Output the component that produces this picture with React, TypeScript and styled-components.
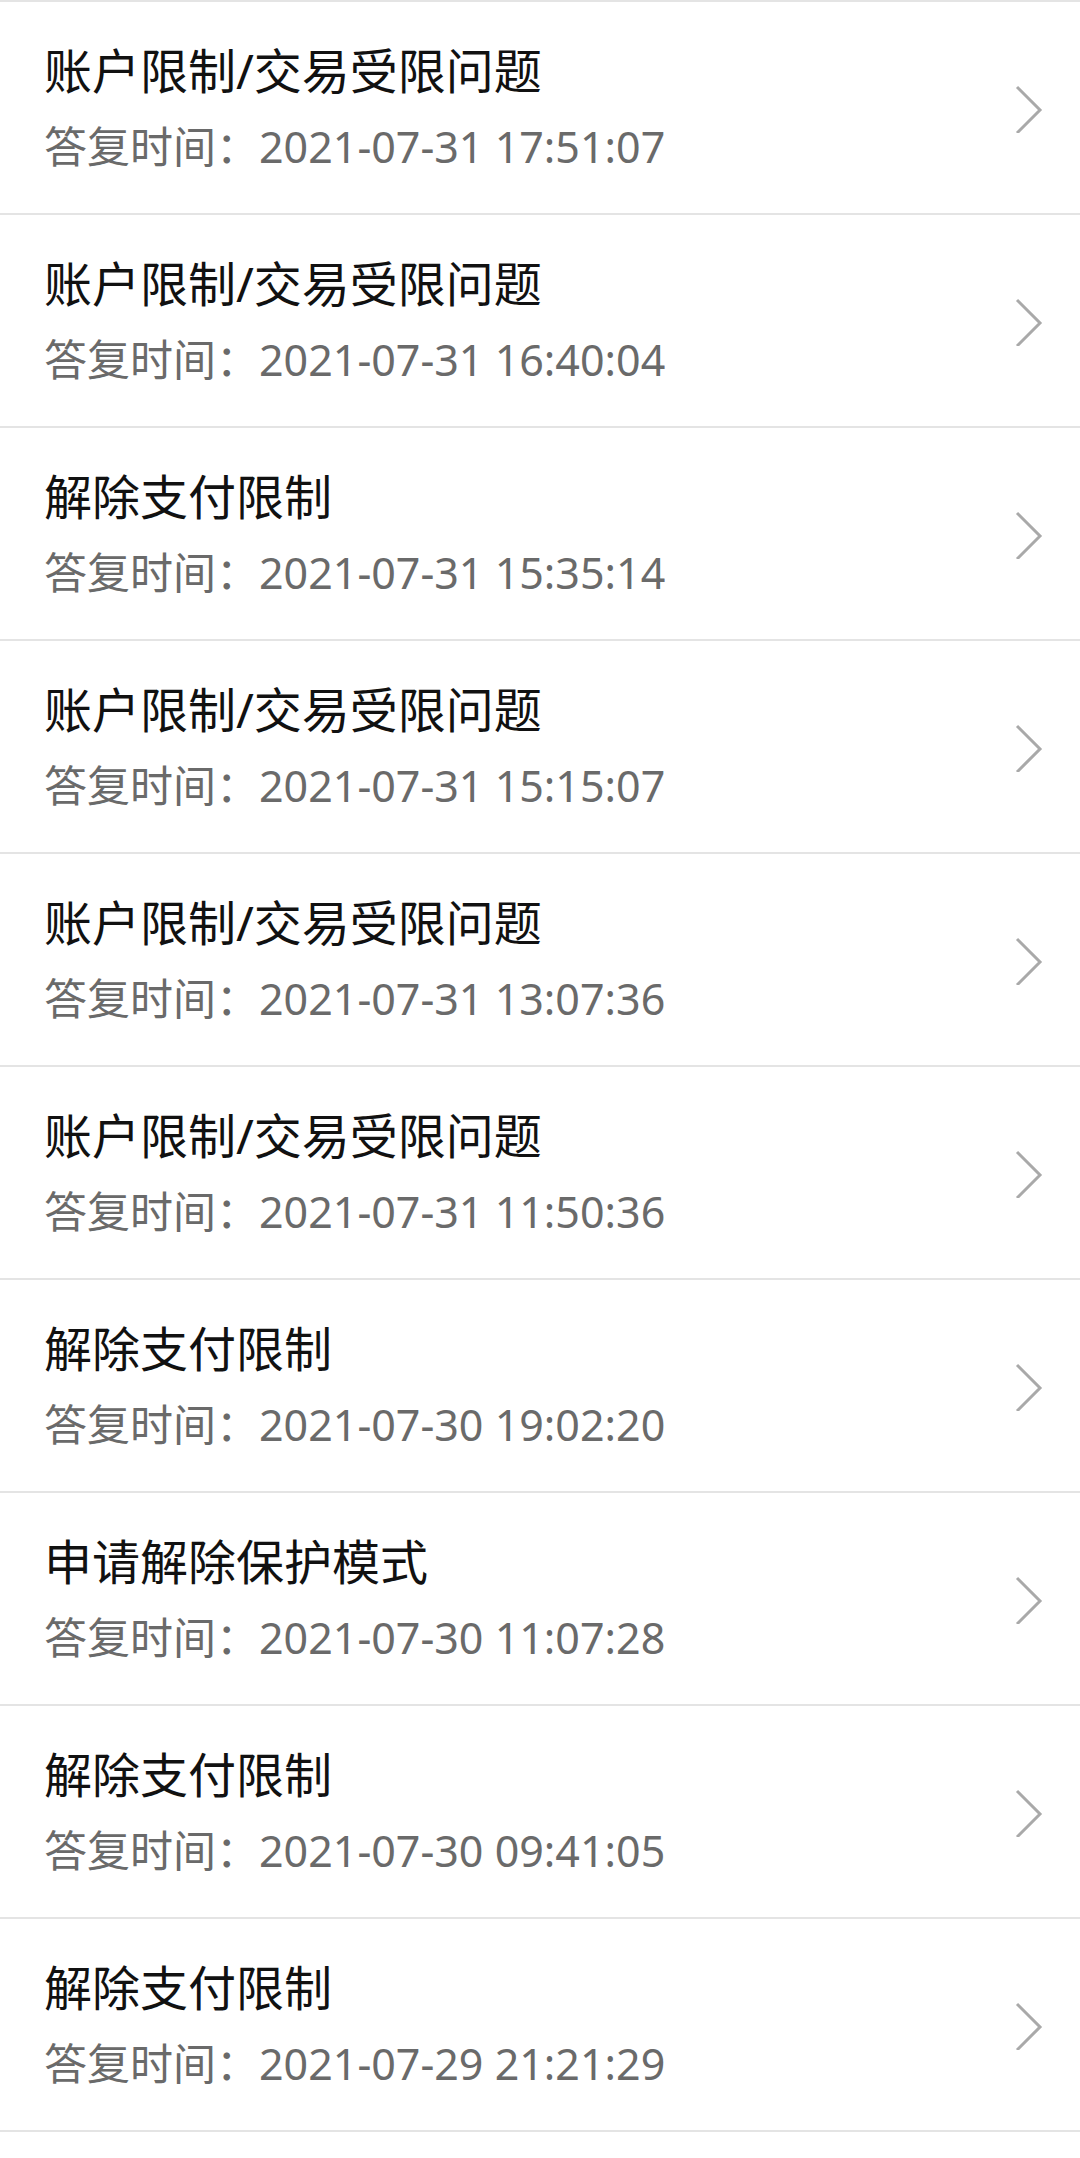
import styled, { createGlobalStyle } from 'styled-components';

const GlobalStyle = createGlobalStyle`
    html, body {
        margin: 0;
        padding: 0;
        background: #ffffff;
    }
    body {
        font-family: "Noto Sans", "Noto Sans CJK SC", sans-serif;
    }
`;

const List = styled.div`
    width: 1080px;
    border-top: 2px solid #e4e4e4;
    background: #ffffff;
`;

const Row = styled.div`
    display: flex;
    align-items: center;
    height: 211px;
    box-sizing: content-box;
    padding: 0 36px 0 44px;
    border-bottom: 2px solid #e4e4e4;
`;

const Texts = styled.div`
    flex: 1;
    display: flex;
    flex-direction: column;
    gap: 18px;
`;

const Title = styled.div`
    font-size: 48px;
    line-height: 60px;
    color: #111111;
`;

const Time = styled.div`
    font-size: 43px;
    line-height: 56px;
    color: #6a6a6a;
`;

const Chevron = styled.svg`
    flex: none;
    width: 30px;
    height: 50px;
`;

const answers = [
    { title: '账户限制/交易受限问题', time: '2021-07-31 17:51:07' },
    { title: '账户限制/交易受限问题', time: '2021-07-31 16:40:04' },
    { title: '解除支付限制', time: '2021-07-31 15:35:14' },
    { title: '账户限制/交易受限问题', time: '2021-07-31 15:15:07' },
    { title: '账户限制/交易受限问题', time: '2021-07-31 13:07:36' },
    { title: '账户限制/交易受限问题', time: '2021-07-31 11:50:36' },
    { title: '解除支付限制', time: '2021-07-30 19:02:20' },
    { title: '申请解除保护模式', time: '2021-07-30 11:07:28' },
    { title: '解除支付限制', time: '2021-07-30 09:41:05' },
    { title: '解除支付限制', time: '2021-07-29 21:21:29' },
];

const App = () => {
    return (
        <>
            <GlobalStyle />
            <List>
                {answers.map((a, i) => (
                    <Row key={i}>
                        <Texts>
                            <Title>{a.title}</Title>
                            <Time>答复时间：{a.time}</Time>
                        </Texts>
                        <Chevron viewBox="0 0 30 50">
                            <polyline points="3,4 26,27 3,50" fill="none" stroke="#a9a9a9" strokeWidth="3" />
                        </Chevron>
                    </Row>
                ))}
            </List>
        </>
    );
};

export default App;
